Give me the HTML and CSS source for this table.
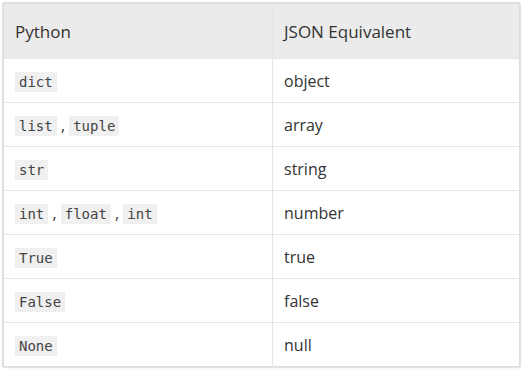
FILE: index.html
```html
<!DOCTYPE html>
<html lang="en">
<head>
    <meta charset="UTF-8">
    <title>Python to JSON</title>
    <link rel="stylesheet" href="styles.css">
</head>
<body>
    <div class="table-wrap">
        <table class="conv-table">
            <thead>
                <tr>
                    <th>Python</th>
                    <th>JSON Equivalent</th>
                </tr>
            </thead>
            <tbody>
                <tr>
                    <td><code>dict</code></td>
                    <td>object</td>
                </tr>
                <tr>
                    <td><code>list</code> , <code>tuple</code></td>
                    <td>array</td>
                </tr>
                <tr>
                    <td><code>str</code></td>
                    <td>string</td>
                </tr>
                <tr>
                    <td><code>int</code> , <code>float</code> , <code>int</code></td>
                    <td>number</td>
                </tr>
                <tr>
                    <td><code>True</code></td>
                    <td>true</td>
                </tr>
                <tr>
                    <td><code>False</code></td>
                    <td>false</td>
                </tr>
                <tr>
                    <td><code>None</code></td>
                    <td>null</td>
                </tr>
            </tbody>
        </table>
    </div>
</body>
</html>
```

FILE: styles.css
```css
* {
    margin: 0;
    padding: 0;
    box-sizing: border-box;
}

body {
    font-family: 'Open Sans', sans-serif;
    color: #333;
    background: #fff;
}

.table-wrap {
    padding: 3px 4px 4px 3px;
}

.conv-table {
    width: 100%;
    border-collapse: collapse;
    border: 1px solid #ddd;
    box-shadow: 0 0 2px rgba(0, 0, 0, 0.35);
    font-size: 16px;
}

.conv-table th {
    background-color: #ebebeb;
    font-weight: normal;
    font-size: 17px;
    text-align: left;
    height: 55px;
    padding: 0 11px;
}

.conv-table td {
    height: 44px;
    padding: 0 11px;
    border-top: 1px solid #e6e6e6;
}

.conv-table th:first-child,
.conv-table td:first-child {
    width: 269px;
    border-right: 1px solid #e6e6e6;
}

.conv-table code {
    font-family: 'DejaVu Sans Mono', monospace;
    font-size: 14px;
    background-color: #f0f0f0;
    padding: 2px 4px;
    color: #444;
}
```
